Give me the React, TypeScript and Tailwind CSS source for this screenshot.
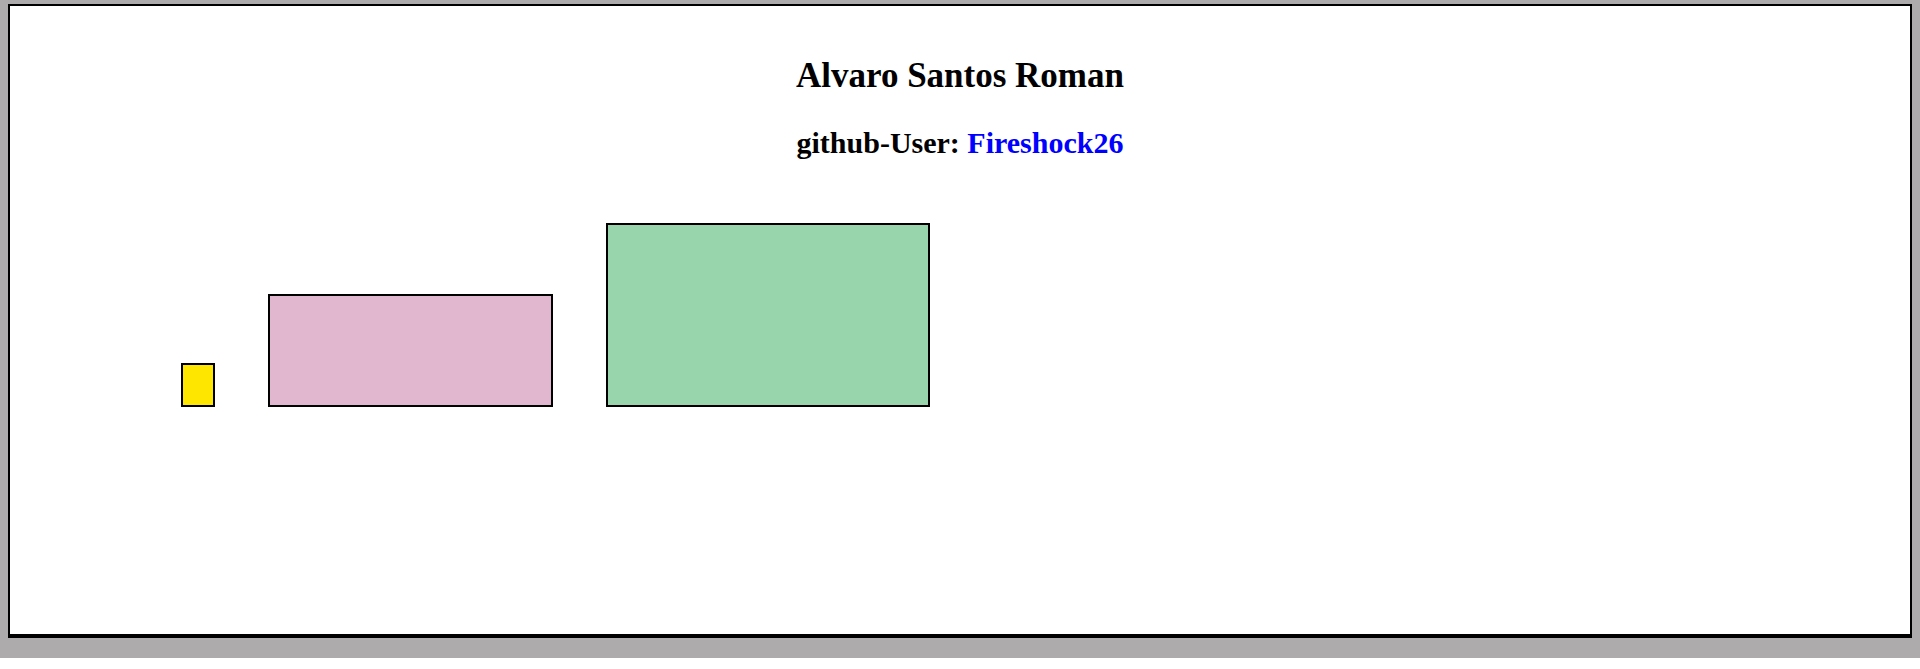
const boxes = [
  { w: "w-[34px]", h: "h-[44px]", bg: "bg-[#ffe600]" },
  { w: "w-[285px]", h: "h-[113px]", bg: "bg-[#e0b7cf]" },
  { w: "w-[324px]", h: "h-[184px]", bg: "bg-[#98d5ac]" },
];

export default function App() {
  return (
    <div className="bg-[#adabab] px-2 pt-1 pb-[20px] font-['Liberation_Serif',serif]">
      <div className="h-[634px] border-2 border-b-4 border-black bg-white pt-[50px]">
        <h1 className="text-center text-[35px] leading-[40px] font-bold text-black">Alvaro Santos Roman</h1>
        <h2 className="mt-[29px] text-center text-[30px] leading-[36px] font-bold text-black">
          github-User: <span className="text-[#0000ff]">Fireshock26</span>
        </h2>
        <div className="mt-[62px] flex items-end gap-[53px] pl-[171px]">
          {boxes.map((b, i) => (
            <div key={i} className={`${b.w} ${b.h} ${b.bg} border-2 border-black`} />
          ))}
        </div>
      </div>
    </div>
  );
}
